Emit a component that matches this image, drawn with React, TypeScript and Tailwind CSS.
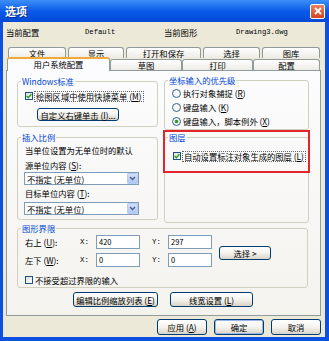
import type { ReactNode } from "react";

function Check({ checked }: { checked?: boolean }) {
  return (
    <span className="inline-flex w-[8px] h-[8px] shrink-0 border border-[#1c5180] bg-linear-to-br from-[#dcdcd7] to-white items-center justify-center">
      {checked && (
        <svg width="6" height="6" viewBox="0 0 6 6">
          <path d="M0.6 3 L2.3 4.7 L5.4 1.2" fill="none" stroke="#21a121" strokeWidth="1.4" />
        </svg>
      )}
    </span>
  );
}

function Radio({ checked }: { checked?: boolean }) {
  return (
    <svg width="9" height="9" viewBox="0 0 9 9" className="shrink-0">
      <circle cx="4.5" cy="4.5" r="4" fill="#f6f6f2" stroke="#1c5180" strokeWidth="0.9" />
      {checked && <circle cx="4.5" cy="4.5" r="1.8" fill="#2b9a2b" />}
    </svg>
  );
}

function XpButton({
  children,
  className = "",
  def,
}: {
  children: ReactNode;
  className?: string;
  def?: boolean;
}) {
  return (
    <div
      className={`flex items-center justify-center rounded-[3px] border border-[#003c74] bg-linear-to-b from-white via-[#f4f3ee] to-[#d9d4c8] text-[8.3px] leading-[10px] ${
        def ? "shadow-[inset_0_0_0_1px_#98b8ea]" : ""
      } ${className}`}
    >
      {children}
    </div>
  );
}

function Group({
  title,
  className = "",
  children,
}: {
  title: string;
  className?: string;
  children?: ReactNode;
}) {
  return (
    <fieldset className={`border border-[#d0d0bf] rounded-[3px] ${className}`}>
      <legend className="ml-[3px] px-[1px] text-[8.3px] leading-[10px] text-[#0046d5]">
        {title}
      </legend>
      {children}
    </fieldset>
  );
}

function Combo({ className = "" }: { className?: string }) {
  return (
    <div
      className={`ml-[6px] w-[115px] h-[13px] border border-[#7f9db9] bg-white flex items-center ${className}`}
    >
      <span className="flex-1 pl-[2px] text-[8.3px] leading-[10px]">不指定 (无单位)</span>
      <span className="w-[11px] h-[11px] rounded-[1px] border border-[#b7cbf5] bg-linear-to-b from-[#d2e0fd] to-[#aec6f6] flex items-center justify-center">
        <svg width="7" height="5" viewBox="0 0 7 5">
          <path d="M1 1 L3.5 3.5 L6 1" fill="none" stroke="#4d6185" strokeWidth="1.4" />
        </svg>
      </span>
    </div>
  );
}

function LimitRow({ label, x, y }: { label: ReactNode; x: string; y: string }) {
  return (
    <div className="flex items-center h-[14px] text-[8.3px] leading-[10px]">
      <span className="ml-[7px] w-[55px]">{label}</span>
      <span className="w-[16px] font-['Liberation_Mono',monospace] text-[7.5px]">X:</span>
      <span className="w-[44px] h-[14px] border border-[#7f9db9] bg-white pl-[2px] text-[7.5px] leading-[12px]">
        {x}
      </span>
      <span className="w-[12px]" />
      <span className="w-[16px] font-['Liberation_Mono',monospace] text-[7.5px]">Y:</span>
      <span className="w-[44px] h-[14px] border border-[#7f9db9] bg-white pl-[2px] text-[7.5px] leading-[12px]">
        {y}
      </span>
    </div>
  );
}

const ROW1 = [
  { label: "文件", w: "w-[58px]" },
  { label: "显示", w: "w-[56px]" },
  { label: "打开和保存", w: "w-[75px]" },
  { label: "选择", w: "w-[57px]" },
  { label: "图库", w: "w-[58px]" },
];

const ROW2 = [
  { label: "草图", w: "w-[72px]" },
  { label: "打印", w: "w-[71px]" },
  { label: "配置", w: "w-[67px]" },
];

export default function App() {
  return (
    <div className="w-[329px] h-[341px] bg-[#0d4fe0] flex flex-col overflow-hidden font-['Noto_Sans_CJK_SC',sans-serif] text-black">
      {/* title bar */}
      <div className="h-[22px] shrink-0 flex items-center bg-linear-to-b from-[#3d8ef7] via-[#0a5be8] to-[#0449d6]">
        <span className="pl-[5px] text-[11px] font-bold text-white leading-[12px] [text-shadow:1px_1px_0_#0a2a8a]">
          选项
        </span>
        <div className="ml-auto mr-[4px] w-[15px] h-[15px] rounded-[2px] border border-white bg-linear-to-b from-[#e9805c] to-[#d4441c] flex items-center justify-center">
          <svg width="8" height="8" viewBox="0 0 8 8">
            <path d="M1 1 L7 7 M7 1 L1 7" stroke="white" strokeWidth="1.8" />
          </svg>
        </div>
      </div>

      {/* body */}
      <div className="flex-1 ml-[3px] mr-[4px] mb-[4px] bg-[#ece9d8] flex flex-col">
        <div className="h-[19px] flex items-center pl-[3px] text-[8.3px] leading-[10px]">
          <span className="w-[79px]">当前配置</span>
          <span className="w-[79px] font-['Liberation_Mono',monospace] text-[7.2px]">Default</span>
          <span className="w-[72px]">当前图形</span>
          <span className="font-['Liberation_Mono',monospace] text-[7.2px]">Drawing3.dwg</span>
        </div>

        {/* tabs */}
        <div className="h-[29px] flex flex-col">
          <div className="flex ml-[5px] mt-[6px] gap-[2px]">
            {ROW1.map((t) => (
              <div
                key={t.label}
                className={`${t.w} h-[11px] border border-b-0 border-[#919b9c] rounded-t-[3px] bg-linear-to-b from-white to-[#ecebe5] text-[8.3px] leading-[10px] text-center`}
              >
                {t.label}
              </div>
            ))}
          </div>
          <div className="relative z-10 flex items-end ml-[4px] -mt-[1px] h-[13px]">
            <div className="w-[103px] h-[14px] -mb-[1px] border border-b-0 border-[#919b9c] border-t-2 border-t-[#f3a83a] rounded-t-[3px] bg-[#fcfcfe] text-[8.3px] leading-[11px] text-center">
              用户系统配置
            </div>
            {ROW2.map((t) => (
              <div
                key={t.label}
                className={`${t.w} h-[11px] border border-b-0 border-[#919b9c] rounded-t-[3px] bg-linear-to-b from-white to-[#ecebe5] text-[8.3px] leading-[10px] text-center`}
              >
                {t.label}
              </div>
            ))}
          </div>
        </div>

        {/* panel */}
        <div className="ml-[3px] w-[315px] h-[246px] border border-[#919b9c] bg-linear-to-b from-[#fcfcfe] to-[#f4f3ee] pl-[10px] pt-[4px] text-[8.3px] leading-[10px]">
          <div className="flex gap-[6px]">
            <div className="w-[141px] pt-[1px] flex flex-col">
              <Group title="Windows标准" className="h-[51px]">
                <div className="mt-[5px] ml-[7px] h-[10px] flex items-center">
                  <Check checked />
                  <span className="ml-[1px] px-[1px] border border-dotted border-[#666] leading-[9px]">
                    绘图区域中使用快捷菜单 (<u>M</u>)
                  </span>
                </div>
                <XpButton className="mt-[7px] ml-[19px] w-[82px] h-[13px]">
                  自定义右键单击 (<u>I</u>)...
                </XpButton>
              </Group>
              <Group title="插入比例" className="mt-[5px] h-[88px]">
                <div className="mt-[3px] ml-[7px] h-[10px]">当单位设置为无单位时的默认</div>
                <div className="mt-[5px] ml-[7px] h-[10px]">
                  源单位内容 (<u>S</u>):
                </div>
                <Combo className="mt-[2px]" />
                <div className="mt-[3px] ml-[7px] h-[10px]">
                  目标单位内容 (<u>T</u>):
                </div>
                <Combo className="mt-[4px]" />
              </Group>
            </div>

            <div className="relative w-[145px] flex flex-col">
              <Group title="坐标输入的优先级" className="h-[55px]">
                <div className="mt-[3px] ml-[7px] h-[10px] flex items-center gap-[2px]">
                  <Radio />
                  <span>
                    执行对象捕捉 (<u>R</u>)
                  </span>
                </div>
                <div className="mt-[4px] ml-[7px] h-[10px] flex items-center gap-[2px]">
                  <Radio />
                  <span>
                    键盘输入 (<u>K</u>)
                  </span>
                </div>
                <div className="mt-[4px] ml-[7px] h-[10px] flex items-center gap-[2px]">
                  <Radio checked />
                  <span>
                    键盘输入，脚本例外 (<u>X</u>)
                  </span>
                </div>
              </Group>
              <Group title="图层" className="mt-[2px] h-[91px]">
                <div className="mt-[9px] ml-[8px] h-[10px] flex items-center">
                  <Check checked />
                  <span className="ml-[1px] px-[1px] border border-dotted border-[#666] leading-[9px]">
                    自动设置标注对象生成的图层 (<u>L</u>)
                  </span>
                </div>
              </Group>
              <div className="absolute left-[-1px] top-[55px] w-[147px] h-[43px] border-2 border-[#e3242b]" />
            </div>
          </div>

          <Group title="图形界限" className="w-[291px] h-[65px]">
            <div className="mt-[2px] flex items-center">
              <div className="flex flex-col gap-[4px]">
                <LimitRow label={<>右上 (<u>U</u>):</>} x="420" y="297" />
                <LimitRow label={<>左下 (<u>W</u>):</>} x="0" y="0" />
              </div>
              <XpButton className="ml-[7px] mt-[4px] w-[52px] h-[14px]">选择 &gt;</XpButton>
            </div>
            <div className="mt-[8px] ml-[7px] h-[10px] flex items-center gap-[2px]">
              <Check />
              <span>不接受超过界限的输入</span>
            </div>
          </Group>

          <div className="mt-[4px] flex">
            <XpButton className="ml-[56px] w-[85px] h-[15px]">
              编辑比例缩放列表 (<u>E</u>)
            </XpButton>
            <XpButton className="ml-[12px] w-[83px] h-[15px]">
              线宽设置 (<u>L</u>)
            </XpButton>
          </div>
        </div>

        {/* dialog buttons */}
        <div className="mt-[3px] flex justify-end gap-[7px] pr-[4px]">
          <XpButton className="w-[50px] h-[16px]">
            应用 (<u>A</u>)
          </XpButton>
          <XpButton def className="w-[50px] h-[16px]">
            确定
          </XpButton>
          <XpButton className="w-[50px] h-[16px]">取消</XpButton>
        </div>
      </div>
    </div>
  );
}
